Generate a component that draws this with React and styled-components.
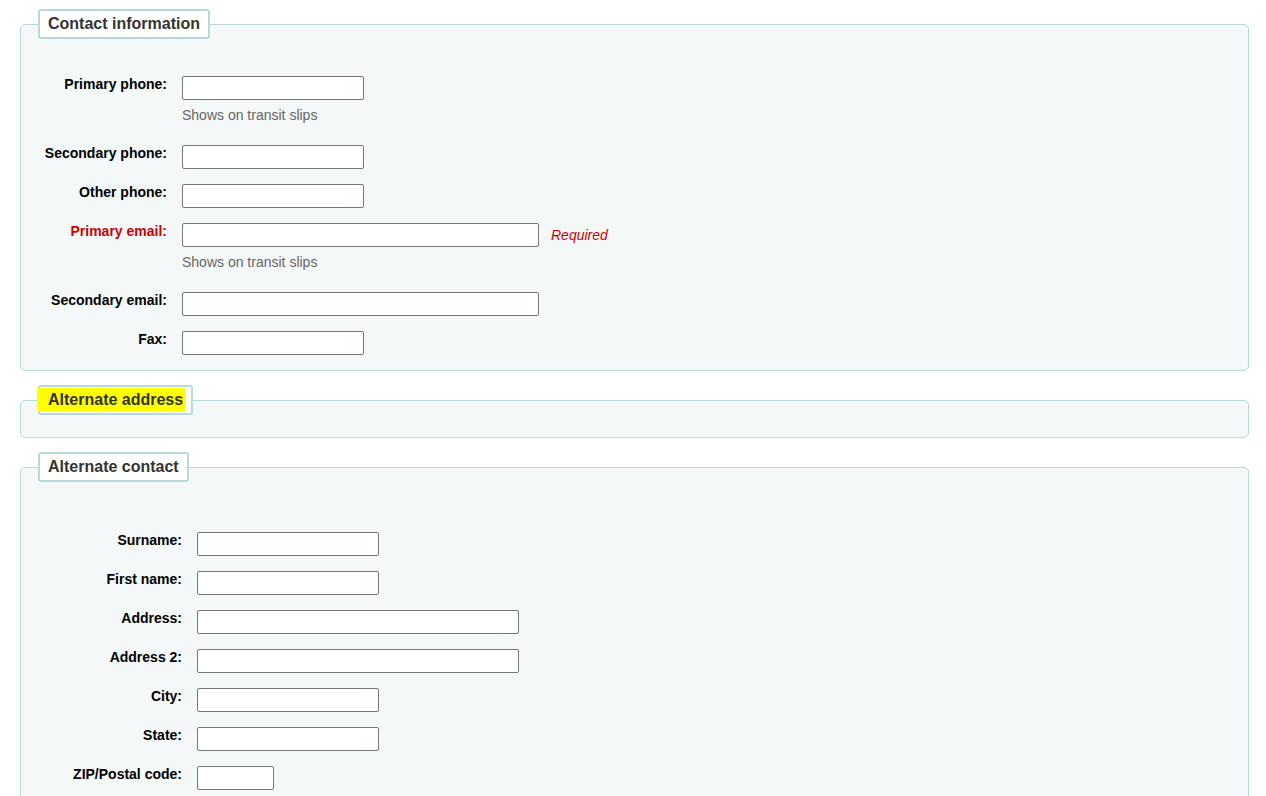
import React from 'react';
import styled, { createGlobalStyle } from 'styled-components';

const GlobalStyle = createGlobalStyle`
  html, body {
    margin: 0;
    padding: 0;
    overflow: hidden;
    background: #ffffff;
  }
  body {
    font-family: "Liberation Sans", Arial, sans-serif;
    font-size: 14px;
    color: #000;
  }
`;

const Page = styled.div`
  padding: 9px 17px 0 20px;
`;

const Fieldset = styled.fieldset`
  margin: 0 0 14px;
  padding: 0 0 ${(p) => p.$padBottom}px;
  border: 1px solid #b9d8d9;
  border-radius: 5px;
  background: #f4f8f9;
  min-inline-size: 0;
`;

const Legend = styled.legend`
  margin-left: 17px;
  padding: 4px 8px;
  border: 2px solid #b9d8d9;
  border-radius: 3px;
  background: #ffffff;
  font-size: 16px;
  line-height: 18px;
  font-weight: bold;
  color: #333;
`;

const Highlight = styled.span`
  position: relative;
  z-index: 0;
  &::before {
    content: '';
    position: absolute;
    z-index: -1;
    left: -11px;
    right: -3px;
    top: -3px;
    bottom: -4px;
    background: #ffff00;
    border-radius: 2px 3px 4px 2px;
  }
`;

const List = styled.ol`
  list-style: none;
  margin: ${(p) => p.$top}px 0 0;
  padding: 0;
`;

const Row = styled.li`
  display: flex;
  align-items: flex-start;
  padding: 7px 0 8px;
`;

const Label = styled.label`
  flex-shrink: 0;
  width: ${(p) => p.$width}px;
  margin-right: 15px;
  text-align: right;
  font-weight: bold;
  line-height: 17px;
  color: ${(p) => (p.$required ? '#cc0000' : '#000')};
`;

const Field = styled.div`
  display: flex;
  flex-direction: column;
`;

const InputLine = styled.div`
  display: flex;
  align-items: center;
  gap: 12px;
`;

const TextInput = styled.input`
  box-sizing: border-box;
  width: ${(p) => p.$width}px;
  height: 24px;
  margin: 0;
  padding: 2px 4px;
  border: 1px solid #767676;
  border-radius: 2px;
  background: #fff;
  font-family: inherit;
  font-size: 14px;
`;

const Required = styled.span`
  font-style: italic;
  color: #cc0000;
  line-height: 17px;
`;

const Hint = styled.div`
  padding: 7px 0 6px;
  line-height: 17px;
  color: #666;
`;

const contact = [
  { label: 'Primary phone:', width: 182, hint: 'Shows on transit slips' },
  { label: 'Secondary phone:', width: 182 },
  { label: 'Other phone:', width: 182 },
  { label: 'Primary email:', width: 357, required: true, hint: 'Shows on transit slips' },
  { label: 'Secondary email:', width: 357 },
  { label: 'Fax:', width: 182 },
];

const altContact = [
  { label: 'Surname:', width: 182 },
  { label: 'First name:', width: 182 },
  { label: 'Address:', width: 322 },
  { label: 'Address 2:', width: 322 },
  { label: 'City:', width: 182 },
  { label: 'State:', width: 182 },
  { label: 'ZIP/Postal code:', width: 77 },
];

function FormRow({ label, width, required, hint, labelWidth }) {
  return (
    <Row>
      <Label $width={labelWidth} $required={required}>{label}</Label>
      <Field>
        <InputLine>
          <TextInput type="text" $width={width} />
          {required && <Required>Required</Required>}
        </InputLine>
        {hint && <Hint>{hint}</Hint>}
      </Field>
    </Row>
  );
}

export default function App() {
  return (
    <>
      <GlobalStyle />
      <Page>
        <Fieldset $padBottom={7}>
          <Legend>Contact information</Legend>
          <List $top={30}>
            {contact.map((f) => (
              <FormRow key={f.label} {...f} labelWidth={146} />
            ))}
          </List>
        </Fieldset>

        <Fieldset $padBottom={22}>
          <Legend>
            <Highlight>Alternate address</Highlight>
          </Legend>
        </Fieldset>

        <Fieldset $padBottom={7}>
          <Legend>Alternate contact</Legend>
          <List $top={43}>
            {altContact.map((f) => (
              <FormRow key={f.label} {...f} labelWidth={161} />
            ))}
          </List>
        </Fieldset>
      </Page>
    </>
  );
}
